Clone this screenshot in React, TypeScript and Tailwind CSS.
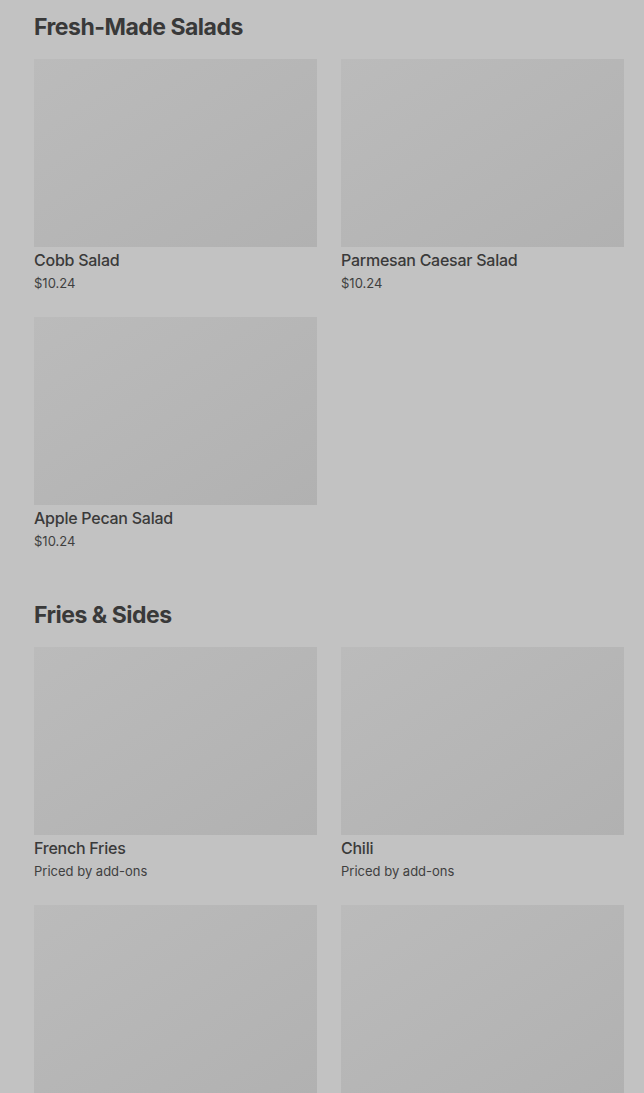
import React from "react";

type Item = { name?: string; price?: string };

const sections: { title: string; items: Item[] }[] = [
  {
    title: "Fresh-Made Salads",
    items: [
      { name: "Cobb Salad", price: "$10.24" },
      { name: "Parmesan Caesar Salad", price: "$10.24" },
      { name: "Apple Pecan Salad", price: "$10.24" },
    ],
  },
  {
    title: "Fries & Sides",
    items: [
      { name: "French Fries", price: "Priced by add-ons" },
      { name: "Chili", price: "Priced by add-ons" },
      {},
      {},
    ],
  },
];

function Card({ item }: { item: Item }) {
  return (
    <div className="flex flex-col">
      <div className="h-[188px] w-full bg-gradient-to-br from-[#bbbbbb] to-[#b1b1b1]" />
      {item.name && (
        <div className="mt-[1px] text-[16px] leading-[24px] font-medium text-[#3a3a3a] font-['Inter',sans-serif] tracking-[-0.25px]">
          {item.name}
        </div>
      )}
      {item.price && (
        <div className="text-[13px] leading-[22px] text-[#3f3f3f] font-['Inter',sans-serif] tracking-[0px]">
          {item.price}
        </div>
      )}
    </div>
  );
}

export default function App() {
  return (
    <div className="min-h-[1093px] bg-[#c2c2c2] pl-[34px] pr-[20px] pt-[11px] pb-[40px]">
      {sections.map((s, i) => (
        <section key={s.title} className={i > 0 ? "mt-[47px]" : ""}>
          <h2 className="text-[23px] leading-[32px] font-bold text-[#393939] font-['Inter',sans-serif] tracking-[-0.5px] mb-[16px]">
            {s.title}
          </h2>
          <div className="grid grid-cols-2 gap-x-[24px] gap-y-[23px]">
            {s.items.map((it, j) => (
              <Card key={j} item={it} />
            ))}
          </div>
        </section>
      ))}
    </div>
  );
}
